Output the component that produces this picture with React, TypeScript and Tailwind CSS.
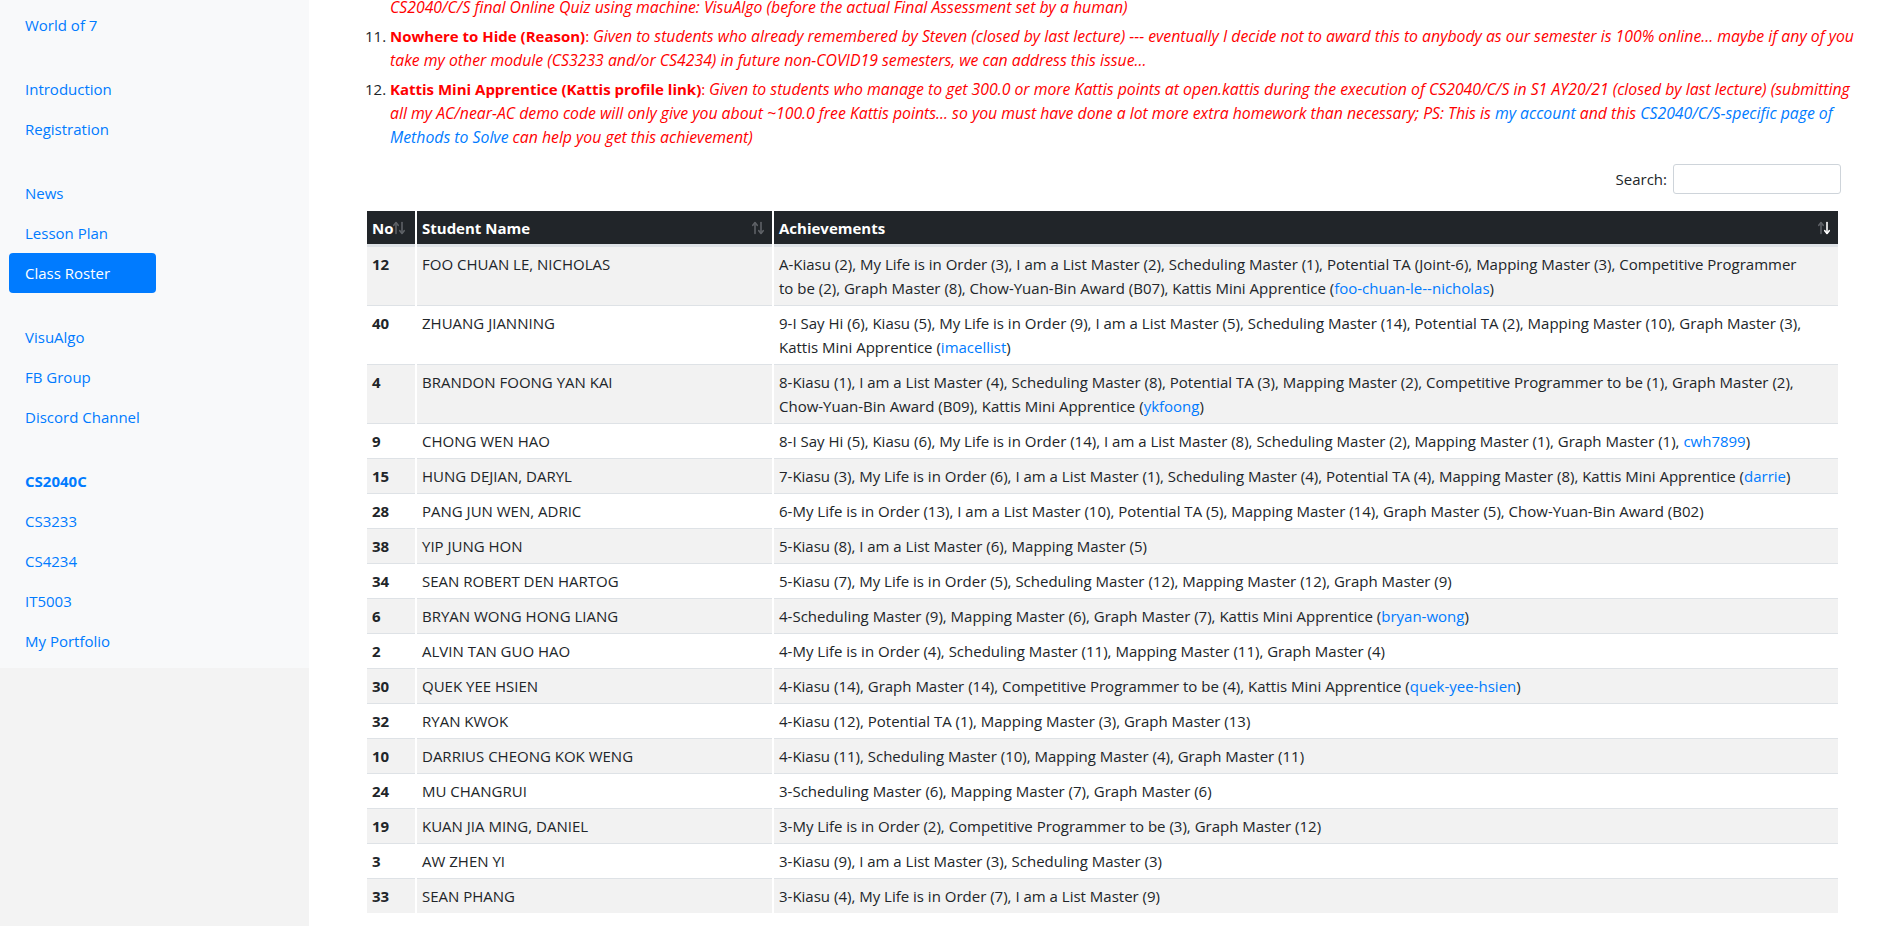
import React from "react";

type Row = { no: number; name: string; ach: React.ReactNode };

const L = ({ children }: { children: React.ReactNode }) => (
  <a className="text-[#007bff]">{children}</a>
);

const rows: Row[] = [
  {
    no: 12,
    name: "FOO CHUAN LE, NICHOLAS",
    ach: (
      <>
        A-Kiasu (2), My Life is in Order (3), I am a List Master (2), Scheduling Master (1), Potential TA (Joint-6), Mapping Master (3), Competitive Programmer
        <br />
        to be (2), Graph Master (8), Chow-Yuan-Bin Award (B07), Kattis Mini Apprentice (<L>foo-chuan-le--nicholas</L>)
      </>
    ),
  },
  {
    no: 40,
    name: "ZHUANG JIANNING",
    ach: (
      <>
        9-I Say Hi (6), Kiasu (5), My Life is in Order (9), I am a List Master (5), Scheduling Master (14), Potential TA (2), Mapping Master (10), Graph Master (3),
        <br />
        Kattis Mini Apprentice (<L>imacellist</L>)
      </>
    ),
  },
  {
    no: 4,
    name: "BRANDON FOONG YAN KAI",
    ach: (
      <>
        8-Kiasu (1), I am a List Master (4), Scheduling Master (8), Potential TA (3), Mapping Master (2), Competitive Programmer to be (1), Graph Master (2),
        <br />
        Chow-Yuan-Bin Award (B09), Kattis Mini Apprentice (<L>ykfoong</L>)
      </>
    ),
  },
  {
    no: 9,
    name: "CHONG WEN HAO",
    ach: (
      <>
        8-I Say Hi (5), Kiasu (6), My Life is in Order (14), I am a List Master (8), Scheduling Master (2), Mapping Master (1), Graph Master (1), <L>cwh7899</L>)
      </>
    ),
  },
  {
    no: 15,
    name: "HUNG DEJIAN, DARYL",
    ach: (
      <>
        7-Kiasu (3), My Life is in Order (6), I am a List Master (1), Scheduling Master (4), Potential TA (4), Mapping Master (8), Kattis Mini Apprentice (<L>darrie</L>)
      </>
    ),
  },
  {
    no: 28,
    name: "PANG JUN WEN, ADRIC",
    ach: <>6-My Life is in Order (13), I am a List Master (10), Potential TA (5), Mapping Master (14), Graph Master (5), Chow-Yuan-Bin Award (B02)</>,
  },
  { no: 38, name: "YIP JUNG HON", ach: <>5-Kiasu (8), I am a List Master (6), Mapping Master (5)</> },
  {
    no: 34,
    name: "SEAN ROBERT DEN HARTOG",
    ach: <>5-Kiasu (7), My Life is in Order (5), Scheduling Master (12), Mapping Master (12), Graph Master (9)</>,
  },
  {
    no: 6,
    name: "BRYAN WONG HONG LIANG",
    ach: (
      <>
        4-Scheduling Master (9), Mapping Master (6), Graph Master (7), Kattis Mini Apprentice (<L>bryan-wong</L>)
      </>
    ),
  },
  {
    no: 2,
    name: "ALVIN TAN GUO HAO",
    ach: <>4-My Life is in Order (4), Scheduling Master (11), Mapping Master (11), Graph Master (4)</>,
  },
  {
    no: 30,
    name: "QUEK YEE HSIEN",
    ach: (
      <>
        4-Kiasu (14), Graph Master (14), Competitive Programmer to be (4), Kattis Mini Apprentice (<L>quek-yee-hsien</L>)
      </>
    ),
  },
  { no: 32, name: "RYAN KWOK", ach: <>4-Kiasu (12), Potential TA (1), Mapping Master (3), Graph Master (13)</> },
  {
    no: 10,
    name: "DARRIUS CHEONG KOK WENG",
    ach: <>4-Kiasu (11), Scheduling Master (10), Mapping Master (4), Graph Master (11)</>,
  },
  { no: 24, name: "MU CHANGRUI", ach: <>3-Scheduling Master (6), Mapping Master (7), Graph Master (6)</> },
  {
    no: 19,
    name: "KUAN JIA MING, DANIEL",
    ach: <>3-My Life is in Order (2), Competitive Programmer to be (3), Graph Master (12)</>,
  },
  { no: 3, name: "AW ZHEN YI", ach: <>3-Kiasu (9), I am a List Master (3), Scheduling Master (3)</> },
  { no: 33, name: "SEAN PHANG", ach: <>3-Kiasu (4), My Life is in Order (7), I am a List Master (9)</> },
];

const navGroups: { label: string; active?: boolean; bold?: boolean }[][] = [
  [{ label: "World of 7" }],
  [{ label: "Introduction" }, { label: "Registration" }],
  [{ label: "News" }, { label: "Lesson Plan" }, { label: "Class Roster", active: true }],
  [{ label: "VisuAlgo" }, { label: "FB Group" }, { label: "Discord Channel" }],
  [
    { label: "CS2040C", bold: true },
    { label: "CS3233" },
    { label: "CS4234" },
    { label: "IT5003" },
    { label: "My Portfolio" },
  ],
];

function SortArrows({ active }: { active?: boolean }) {
  return (
    <svg width="12" height="14" viewBox="0 0 12 14" className="shrink-0">
      <g fill="none" strokeWidth="1.6" strokeLinecap="round" strokeLinejoin="round">
        <g stroke="#5e6166">
          <line x1="3" y1="12.5" x2="3" y2="1.8" />
          <polyline points="0.8,4.3 3,1.6 5.2,4.3" />
        </g>
        <g stroke={active ? "#ffffff" : "#5e6166"}>
          <line x1="9" y1="1.5" x2="9" y2="12.2" />
          <polyline points="6.8,9.7 9,12.4 11.2,9.7" />
        </g>
      </g>
    </svg>
  );
}

export default function App() {
  return (
    <div className="flex h-[926px] w-full overflow-hidden bg-white font-['Open_Sans','Segoe_UI',sans-serif] text-[15px] leading-6 text-[#212529]">
      <aside className="w-[309px] shrink-0 bg-[#f3f3f3]">
        <nav className="flex flex-col gap-6 bg-[#f8f9fa] pb-[7px] pl-[9px] pt-[5px]">
          {navGroups.map((g, i) => (
            <div key={i} className="flex flex-col">
              {g.map((it) => (
                <a
                  key={it.label}
                  className={
                    it.active
                      ? "block w-[147px] rounded-[4px] bg-[#007bff] px-4 py-2 text-white"
                      : it.bold
                      ? "block w-[147px] px-4 py-2 font-bold text-[#007bff]"
                      : "block w-[147px] px-4 py-2 text-[#007bff]"
                  }
                >
                  {it.label}
                </a>
              ))}
            </div>
          ))}
        </nav>
      </aside>

      <main className="min-w-0 flex-1 pl-[56px]">
        <ol start={11} className="flex list-decimal flex-col gap-[5px] whitespace-nowrap pl-[25px] marker:text-[#212529]">
          <div className="-mt-[5px] text-[15.8px] italic text-[#ff0000]">
            CS2040/C/S final Online Quiz using machine: VisuAlgo (before the actual Final Assessment set by a human)
          </div>
          <li className="text-[#ff0000]">
            <span className="font-bold">Nowhere to Hide (Reason)</span>:{" "}
            <em className="text-[15.8px]">
              Given to students who already remembered by Steven (closed by last lecture) --- eventually I decide not to award this to anybody as our semester is 100% online... maybe if any of you
              <br />
              take my other module (CS3233 and/or CS4234) in future non-COVID19 semesters, we can address this issue...
            </em>
          </li>
          <li className="text-[#ff0000]">
            <span className="font-bold">Kattis Mini Apprentice (Kattis profile link)</span>:{" "}
            <em className="text-[15.8px]">
              Given to students who manage to get 300.0 or more Kattis points at open.kattis during the execution of CS2040/C/S in S1 AY20/21 (closed by last lecture) (submitting
              <br />
              all my AC/near-AC demo code will only give you about ~100.0 free Kattis points... so you must have done a lot more extra homework than necessary; PS: This is{" "}
              <span className="text-[#007bff]">my account</span> and this{" "}
              <span className="text-[#007bff]">CS2040/C/S-specific page of</span>
              <br />
              <span className="text-[#007bff]">Methods to Solve</span> can help you get this achievement)
            </em>
          </li>
        </ol>

        <div className="w-[1476px]">
          <div className="mt-[15px] flex h-[30px] items-center justify-end">
            <label className="flex items-center">
              Search:
              <input className="ml-[6px] h-[30px] w-[168px] rounded-[3px] border border-[#ced4da] bg-white px-2 outline-none" />
            </label>
          </div>

          <table className="mt-[17px] w-[1475px] table-fixed border-separate border-spacing-x-[2px] border-spacing-y-0">
            <colgroup>
              <col className="w-[48px]" />
              <col className="w-[355px]" />
              <col />
            </colgroup>
            <thead>
              <tr>
                <th className="border-b-2 border-[#dee2e6] bg-[#212529] px-[5px] pb-[4px] pt-[5px] text-left font-bold text-white">
                  <div className="flex items-center">
                    <span>No</span>
                    <SortArrows />
                  </div>
                </th>
                <th className="border-b-2 border-[#dee2e6] bg-[#212529] pb-[4px] pl-[5px] pr-[8px] pt-[5px] text-left font-bold text-white">
                  <div className="flex items-center justify-between">
                    <span>Student Name</span>
                    <SortArrows />
                  </div>
                </th>
                <th className="border-b-2 border-[#dee2e6] bg-[#212529] pb-[4px] pl-[5px] pr-[8px] pt-[5px] text-left font-bold text-white">
                  <div className="flex items-center justify-between">
                    <span>Achievements</span>
                    <SortArrows active />
                  </div>
                </th>
              </tr>
            </thead>
            <tbody>
              {rows.map((r, i) => {
                const bg = i % 2 === 0 ? "bg-[#f2f2f2]" : "bg-white";
                return (
                  <tr key={r.no}>
                    <td className={`border-t border-[#dee2e6] px-[5px] py-[5px] align-top font-bold ${bg}`}>{r.no}</td>
                    <td className={`border-t border-[#dee2e6] px-[5px] py-[5px] align-top ${bg}`}>{r.name}</td>
                    <td className={`whitespace-nowrap border-t border-[#dee2e6] px-[5px] py-[5px] align-top ${bg}`}>{r.ach}</td>
                  </tr>
                );
              })}
            </tbody>
          </table>
        </div>
      </main>
    </div>
  );
}
